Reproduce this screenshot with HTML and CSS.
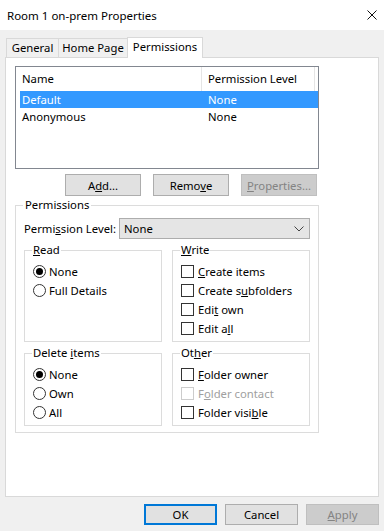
FILE: index.html
```html
<!DOCTYPE html>
<html lang="en">
<head>
  <meta charset="UTF-8">
  <title>Room 1 on-prem Properties</title>
  <link rel="stylesheet" href="styles.css">
</head>
<body>
  <div class="titlebar">
    <span class="title">Room 1 on-prem Properties</span>
    <svg class="close" width="10" height="10" viewBox="0 0 10 10">
      <path d="M0.5 0.5 L9.5 9.5 M9.5 0.5 L0.5 9.5" stroke="#111" stroke-width="1" fill="none"/>
    </svg>
  </div>

  <div class="dialog">
    <div class="tabs">
      <div class="tab general">General</div>
      <div class="tab home">Home Page</div>
      <div class="tab active">Permissions</div>
    </div>

    <div class="panel">
      <div class="listview">
        <div class="lv-head">
          <div class="col-name">Name</div>
          <div class="col-level">Permission Level</div>
        </div>
        <div class="lv-row selected">
          <div class="col-name">Default</div>
          <div class="col-level">None</div>
        </div>
        <div class="lv-row">
          <div class="col-name">Anonymous</div>
          <div class="col-level">None</div>
        </div>
      </div>

      <div class="list-buttons">
        <button class="btn">A<u>d</u>d...</button>
        <button class="btn">Remo<u>v</u>e</button>
        <button class="btn disabled"><u>P</u>roperties...</button>
      </div>

      <fieldset class="group perms">
        <legend>Permissions</legend>
        <div class="level-row">
          <span class="level-label">Permi<u>s</u>sion Level:</span>
          <div class="combo">
            <span>None</span>
            <svg width="10" height="6" viewBox="0 0 10 6">
              <path d="M0.5 0.5 L5 5 L9.5 0.5" stroke="#444" stroke-width="1" fill="none"/>
            </svg>
          </div>
        </div>

        <div class="subgroups">
          <fieldset class="group sub">
            <legend><u>R</u>ead</legend>
            <div class="opt"><span class="radio checked"></span><span>None</span></div>
            <div class="opt"><span class="radio"></span><span>Full Details</span></div>
          </fieldset>

          <fieldset class="group sub">
            <legend><u>W</u>rite</legend>
            <div class="opt"><span class="check"></span><span><u>C</u>reate items</span></div>
            <div class="opt"><span class="check"></span><span>Create s<u>u</u>bfolders</span></div>
            <div class="opt"><span class="check"></span><span>Edi<u>t</u> own</span></div>
            <div class="opt"><span class="check"></span><span>Edit a<u>l</u>l</span></div>
          </fieldset>

          <fieldset class="group sub">
            <legend>Delete <u>i</u>tems</legend>
            <div class="opt"><span class="radio checked"></span><span>None</span></div>
            <div class="opt"><span class="radio"></span><span>Own</span></div>
            <div class="opt"><span class="radio"></span><span>All</span></div>
          </fieldset>

          <fieldset class="group sub">
            <legend>Ot<u>h</u>er</legend>
            <div class="opt"><span class="check"></span><span><u>F</u>older owner</span></div>
            <div class="opt off"><span class="check"></span><span>F<u>o</u>lder contact</span></div>
            <div class="opt"><span class="check"></span><span>Folder visi<u>b</u>le</span></div>
          </fieldset>
        </div>
      </fieldset>
    </div>

    <div class="footer">
      <button class="btn default">OK</button>
      <button class="btn">Cancel</button>
      <button class="btn disabled"><u>A</u>pply</button>
    </div>
  </div>
</body>
</html>
```

FILE: styles.css
```css
body {
  margin: 0;
  width: 384px;
  height: 531px;
  background: #f0f0f0;
  font-family: 'Noto Sans', 'Liberation Sans', sans-serif;
  font-size: 11.3px;
  color: #000;
  overflow: hidden;
}

u {
  text-underline-offset: 1px;
}

.titlebar {
  height: 30px;
  background: #fff;
  display: flex;
  align-items: center;
  justify-content: space-between;
  padding: 0 7px 0 7px;
}

.title {
  font-size: 11.5px;
}

.close {
  display: block;
}

.dialog {
  padding: 7px 0 0 5px;
}

/* tabs */
.tabs {
  display: flex;
  align-items: flex-end;
  height: 20px;
  padding-left: 1px;
}

.tab {
  height: 19px;
  line-height: 18px;
  text-align: center;
  border: 1px solid #d9d9d9;
  border-bottom: none;
  box-sizing: border-box;
  background: #f0f0f0;
  margin-left: -1px;
}

.tab.general {
  margin-left: 0;
  width: 53px;
}

.tab.home {
  width: 70px;
}

.tab.active {
  width: 76px;
  height: 21px;
  line-height: 17px;
  background: #fff;
  margin-bottom: -1px;
  position: relative;
  z-index: 1;
}

.panel {
  width: 374px;
  height: 440px;
  box-sizing: border-box;
  background: #fff;
  border: 1px solid #d9d9d9;
  padding: 8px 0 0 9px;
}

/* list view */
.listview {
  width: 304px;
  height: 103px;
  box-sizing: border-box;
  border: 1px solid #828790;
}

.lv-head {
  display: flex;
  height: 24px;
  line-height: 24px;
}

.lv-head .col-name {
  width: 179px;
  padding-left: 6px;
  border-right: 1px solid #e5e5e5;
}

.lv-head .col-level {
  width: 106px;
  padding-left: 6px;
  border-right: 1px solid #e5e5e5;
}

.lv-row {
  display: flex;
  height: 17px;
  line-height: 17px;
  margin-left: 4px;
}

.lv-row .col-name {
  width: 180px;
  padding-left: 2px;
}

.lv-row .col-level {
  width: 109px;
  padding-left: 6px;
}

.lv-row.selected {
  background: #3399ff;
  color: #fff;
}

/* buttons */
.btn {
  font-family: inherit;
  font-size: 11.3px;
  color: #000;
  background: #e1e1e1;
  border: 1px solid #adadad;
  height: 22px;
  padding: 0;
  margin: 0;
  box-sizing: border-box;
}

.btn.disabled {
  background: #cccccc;
  border-color: #bfbfbf;
  color: #838383;
}

.btn.default {
  border: 2px solid #0078d7;
}

.list-buttons {
  display: flex;
  gap: 12px;
  padding-left: 50px;
  margin-top: 5px;
}

.list-buttons .btn {
  width: 76px;
}

/* group boxes */
.group {
  margin: 0;
  border: 1px solid #dcdcdc;
  min-width: 0;
  box-sizing: border-box;
}

.group legend {
  line-height: 14px;
  padding: 0 2px;
}

.perms {
  width: 304px;
  margin-top: 2px;
  padding: 6px 7px 6px 8px;
}

.perms > legend {
  margin-left: -1px;
}

.level-row {
  display: flex;
  align-items: center;
  height: 21px;
}

.level-label {
  width: 95px;
  white-space: nowrap;
}

.combo {
  width: 191px;
  height: 21px;
  box-sizing: border-box;
  background: #e5e5e5;
  border: 1px solid #adadad;
  display: flex;
  align-items: center;
  justify-content: space-between;
  padding: 0 5px 0 4px;
}

.subgroups {
  display: grid;
  grid-template-columns: 138px 138px;
  column-gap: 10px;
  row-gap: 4px;
  margin-top: 4px;
}

.sub {
  padding: 5px 4px 3px 8px;
}

.sub legend {
  margin-left: -1px;
  padding: 0 1px;
}

.opt {
  display: flex;
  align-items: center;
  height: 19px;
  white-space: nowrap;
}

.radio {
  width: 13px;
  height: 13px;
  box-sizing: border-box;
  border: 1px solid #333;
  border-radius: 50%;
  background: #fff;
  margin-right: 3px;
  display: flex;
  align-items: center;
  justify-content: center;
}

.radio.checked::after {
  content: '';
  width: 7px;
  height: 7px;
  border-radius: 50%;
  background: #000;
}

.check {
  width: 13px;
  height: 13px;
  box-sizing: border-box;
  border: 1px solid #333;
  background: #fff;
  margin-right: 4px;
}

.opt.off {
  color: #a0a0a0;
}

.opt.off .check {
  border-color: #cccccc;
}

/* footer */
.footer {
  display: flex;
  justify-content: flex-end;
  gap: 8px;
  padding: 7px 5px 0 0;
}

.footer .btn {
  width: 73px;
  height: 21px;
}
```
